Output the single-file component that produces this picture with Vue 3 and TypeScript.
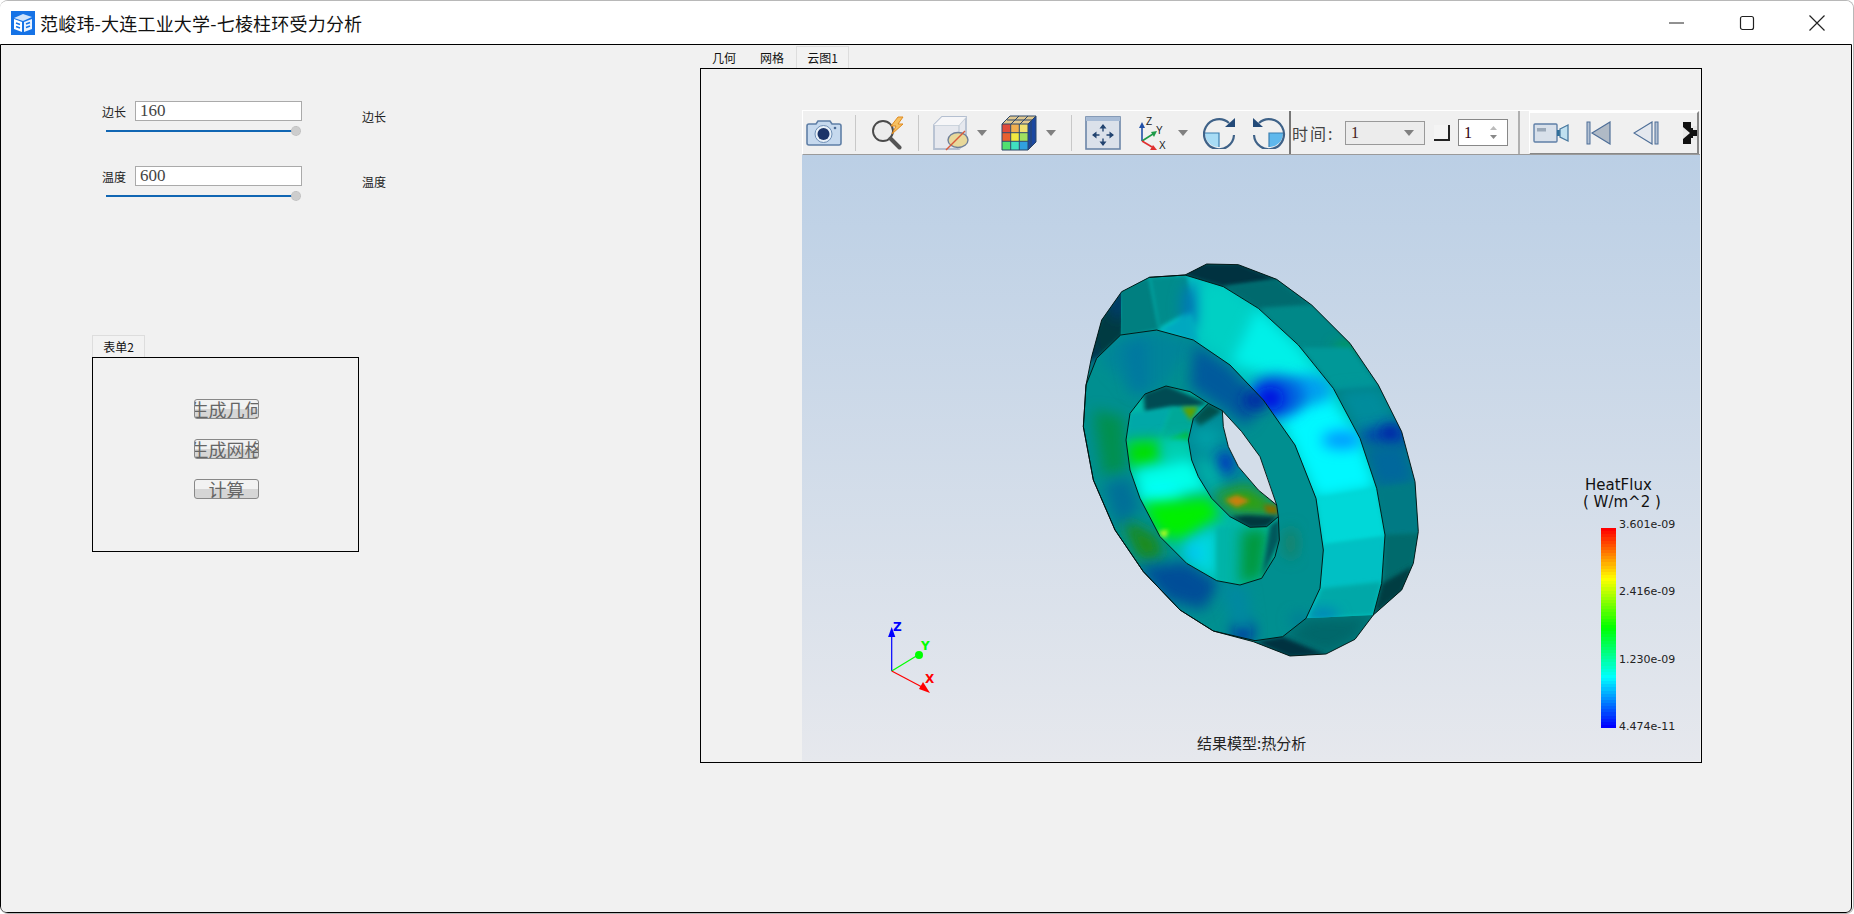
<script setup lang="ts">
type Patch = { pts?: string; e?: [number, number, number, number]; c: string; f: 'soft' | 'mid' }
const poly = (pts: string, c: string, f: 'soft' | 'mid' = 'mid'): Patch => ({ pts, c, f })
const blob = (x: number, y: number, rx: number, ry: number, c: string): Patch => ({ e: [x, y, rx, ry], c, f: 'soft' })

const pathOf = (s: string) => 'M' + s.trim().split(/\s+/).join('L') + 'Z'
const silhouette = '440,42 535,44 650,88 755,165 870,280 955,405 1025,545 1065,695 1075,845 1060,940 1025,1020 940,1095 885,1168 798,1212 690,1218 580,1175 460,1143 360,1080 250,965 165,840 100,690 70,530 78,405 95,320 125,210 185,125 268,82 375,75'
const band = '185,125 268,82 375,75 490,110 595,175 715,285 820,415 900,565 950,715 975,855 965,1000 940,1095 738,1105 780,1015 790,900 768,745 705,585 610,450 510,345 400,270 290,240 182,255'
const frontOuter = '182,255 290,240 400,270 510,345 610,450 705,585 768,745 790,900 780,1015 738,1105 668,1160 585,1172 460,1143 360,1080 250,965 165,840 100,690 70,530 78,405 110,325'
const hole = '255,432 318,408 390,425 445,460 487,482 545,545 600,620 650,765 655,800 658,870 645,920 605,985 540,1005 470,992 380,940 300,860 240,745 210,660 198,570 210,490'
const backWall = '445,460 487,482 490,530 505,590 535,650 595,720 650,765 655,800 620,830 570,832 510,800 455,745 415,680 395,630 385,570 400,505'
const gap = '487,482 545,545 600,620 625,690 650,765 595,720 535,650 505,590 490,530'

const surfaces: { id: string; d: string; base: string; patches: Patch[] }[] = [
  {
    id: 'sOuter', d: pathOf(silhouette), base: '#007f80', patches: [
      poly('380,40 540,40 660,90 490,112 375,78', '#003340'),
      poly('490,110 650,88 760,170 595,178', '#006a6e'),
      poly('600,175 755,165 875,285 720,290', '#008888'),
      poly('820,290 875,275 890,310 840,320', '#00a848', 'soft'),
      poly('720,290 870,290 960,410 825,420', '#009898'),
      poly('825,420 960,410 1030,550 900,565', '#008c9c', 'soft'),
      poly('900,540 1030,530 1040,590 905,575', '#0040b0', 'soft'),
      blob(990, 550, 30, 28, '#0020a8'),
      poly('910,590 1030,580 1070,700 950,715', '#00689c', 'soft'),
      poly('950,715 1070,700 1080,850 975,855', '#007a84'),
      poly('975,855 1080,850 1060,945 970,1000', '#006a6c'),
      poly('965,1000 1060,945 1030,1025 940,1095', '#003e42'),
      poly('668,1165 740,1105 940,1095 885,1170 800,1215', '#00686a', 'soft'),
      poly('585,1175 668,1160 800,1215 690,1222', '#003040'),
      poly('60,340 125,200 190,115 190,255 110,325', '#003a42'),
      blob(172, 165, 14, 45, '#003c8c'),
      blob(98, 320, 8, 30, '#00308c'),
    ],
  },
  {
    id: 'sBand', d: pathOf(band), base: '#00c4c0', patches: [
      poly('175,110 268,80 300,240 175,265', '#007f80'),
      poly('268,80 380,75 400,175 295,235', '#008c8c'),
      blob(395, 170, 30, 70, '#0078b8'),
      poly('300,240 395,190 420,280', '#00a8c0'),
      poly('420,100 490,100 590,175 510,335 420,270', '#00d0c4', 'soft'),
      poly('590,170 715,285 800,400 690,400 510,340', '#00f0e8', 'soft'),
      poly('650,480 800,420 900,565 950,715 770,745', '#00f8ff', 'soft'),
      blob(845, 570, 60, 28, '#0098ff'),
      blob(745, 420, 70, 45, '#00a0f0'),
      blob(650, 440, 85, 65, '#0060e0'),
      blob(630, 445, 42, 36, '#0008e0'),
      poly('770,745 950,715 975,860 790,885', '#00d8d8'),
      poly('790,885 975,860 970,995 785,1015', '#00c0c4'),
      poly('785,1015 965,995 940,1095 745,1105', '#00a8a8'),
      blob(790, 1095, 45, 16, '#0078c0'),
    ],
  },
  {
    id: 'sFront', d: pathOf(frontOuter) + pathOf(hole), base: '#008f90', patches: [
      poly('120,320 180,260 290,245 400,275 300,420 220,430', '#00849a', 'soft'),
      poly('190,290 260,260 260,420 220,430', '#0078a0', 'soft'),
      poly('400,280 510,350 610,455 560,530 480,470 390,410', '#005a9c', 'soft'),
      blob(590, 450, 40, 28, '#0020a8'),
      poly('100,480 190,500 200,660 130,680', '#009050', 'soft'),
      poly('180,800 290,860 310,920 240,930', '#1a8a14', 'soft'),
      poly('130,700 210,680 240,780 170,830', '#007098', 'soft'),
      poly('230,950 380,935 480,1000 430,1080 320,1050', '#004e98', 'soft'),
      blob(550, 1145, 30, 26, '#0010a8'),
      poly('480,1000 560,1010 580,1150 520,1130', '#0088a0', 'soft'),
      blob(692, 880, 18, 50, '#1a8060'),
      blob(720, 1110, 30, 20, '#007a98'),
    ],
  },
  {
    id: 'sHole', d: pathOf(hole), base: '#00b8a8', patches: [
      poly('250,430 318,405 445,460 395,475 335,472 255,490', '#004c52'),
      poly('210,490 335,472 300,565 198,572', '#00a8a8'),
      poly('335,472 415,472 385,565 300,565', '#00a898'),
      poly('365,472 415,470 392,512', '#60a000'),
      poly('320,568 385,545 388,572', '#00b828'),
      poly('198,575 300,570 310,640 208,660', '#00e000', 'soft'),
      poly('300,570 390,565 400,625 310,640', '#00d0b0', 'soft'),
      poly('215,660 395,625 450,720 250,760', '#00ffe8', 'soft'),
      blob(310, 735, 60, 30, '#00ffff'),
      poly('240,760 450,740 480,800 370,870 300,860', '#00f000', 'soft'),
      poly('295,845 325,840 315,865', '#d0ff20'),
      poly('370,880 470,830 470,990 400,950', '#00d8e0', 'soft'),
      blob(400, 910, 20, 22, '#00c0ff'),
      poly('470,830 560,835 545,1005 470,992', '#00b4a8'),
      poly('545,840 625,835 605,985 540,1005', '#00983c', 'soft'),
      poly('630,825 660,805 660,870 605,985', '#00585c'),
    ],
  },
  {
    id: 'sBack', d: pathOf(backWall), base: '#008c98', patches: [
      poly('400,505 445,460 487,482 420,530', '#00504c'),
      poly('390,560 420,530 490,540 450,620', '#00a0a8', 'soft'),
      blob(495, 640, 24, 34, '#0028c8'),
      poly('400,640 450,620 490,700 455,745', '#00b0a8', 'soft'),
      poly('455,735 560,705 650,765 640,795 520,790', '#30a010', 'soft'),
      poly('495,750 530,735 570,752 530,772', '#c88010'),
      poly('610,765 650,765 655,795 620,790', '#807000'),
      poly('510,800 560,795 655,800 620,832 570,835', '#00383c'),
    ],
  },
]

const legendBands = Array.from({ length: 64 }, (_, i) => {
  const t = i / 63
  const stops: [number, number[]][] = [
    [0, [255, 0, 0]], [0.25, [255, 255, 0]], [0.5, [0, 255, 0]], [0.75, [0, 255, 255]], [1, [0, 0, 255]],
  ]
  for (let k = 0; k < 4; k++) {
    const [a, ca] = stops[k]
    const [b, cb] = stops[k + 1]
    if (t <= b) {
      const u = (t - a) / (b - a)
      return `rgb(${ca.map((v, n) => Math.round(v + (cb[n] - v) * u)).join(',')})`
    }
  }
  return 'rgb(0,0,255)'
})

const params = [
  { label: '边长', value: '160' },
  { label: '温度', value: '600' },
]
const actions = ['生成几何', '生成网格', '计算']
const legendLabels = ['3.601e-09', '2.416e-09', '1.230e-09', '4.474e-11']
const cubeColors = ['#e04a3a', '#f0b050', '#f0e070', '#e86030', '#f0e840', '#a0e060', '#50e070', '#40e0c0', '#30a0e0']
</script>

<template>
  <div class="window">
    <header class="titlebar">
      <svg class="app-icon" width="24" height="24" viewBox="0 0 24 24">
        <rect width="24" height="24" fill="#1673e6" />
        <path d="M3 7 12 3l9 3-9 4z" fill="#cfe3fb" />
        <path d="M3 8l8 3v10l-8-3z" fill="#fff" />
        <path d="M13 11l8-3v10l-8 3z" fill="#eaf3fe" />
        <path d="M5 12l4 1.500M5 15.500l4 1.500M15 13l4-1.500M15 16.500l4-1.500" stroke="#1673e6" stroke-width="1.600" />
      </svg>
      <span class="title">范峻玮-大连工业大学-七棱柱环受力分析</span>
      <div class="controls">
        <svg width="16" height="16" viewBox="0 0 16 16"><path d="M0 8h15" stroke="#222" fill="none" /></svg>
        <svg width="16" height="16" viewBox="0 0 16 16"><rect x="1.500" y="1.500" width="13" height="13" rx="2" stroke="#222" stroke-width="1.200" fill="none" /></svg>
        <svg width="16" height="16" viewBox="0 0 16 16"><path d="M.5.5l15 15M15.500.5l-15 15" stroke="#222" stroke-width="1.200" fill="none" /></svg>
      </div>
    </header>

    <main class="body">
      <section class="left">
        <div class="params">
          <div v-for="p in params" :key="p.label" class="param">
            <div class="param-main">
              <div class="field">
                <label>{{ p.label }}</label>
                <input :value="p.value" readonly />
              </div>
              <div class="slider"><i class="thumb"></i></div>
            </div>
            <span class="side-label">{{ p.label }}</span>
          </div>
        </div>
        <div class="form">
          <div class="form-tab">表单2</div>
          <div class="form-box">
            <button v-for="a in actions" :key="a" class="action"><span>{{ a }}</span></button>
          </div>
        </div>
      </section>

      <section class="right">
        <nav class="tabs">
          <span class="tab">几何</span>
          <span class="tab">网格</span>
          <span class="tab active">云图1</span>
        </nav>
        <div class="panel">
          <div class="viewer">
            <div class="toolbar">
              <svg class="m4" width="36" height="28" viewBox="0 0 36 28">
                <path d="M3 5h7l2-3h12l2 3h7q2 0 2 2v17q0 2-2 2H3q-2 0-2-2V7q0-2 2-2z" fill="#c6d9ee" stroke="#5f7fa6" stroke-width="1.600" />
                <circle cx="17.500" cy="15" r="8.500" fill="#e8f0f8" stroke="#6f8fb5" />
                <circle cx="17.500" cy="15" r="6" fill="#1c3468" />
                <circle cx="29" cy="9" r="1.300" fill="#4a6a94" />
              </svg>
              <i class="sep m13"></i>
              <svg class="m13" width="37" height="34" viewBox="0 0 37 34">
                <circle cx="14" cy="15" r="10" fill="#ececec" stroke="#4a4a4a" stroke-width="1.900" />
                <path d="M21.500 22.500l9 9" stroke="#555" stroke-width="4" stroke-linecap="round" />
                <path d="M29 1l-7 9h5l-4 8 11-10h-5l5-7z" fill="#f6c060" stroke="#e08a20" stroke-width="1" />
              </svg>
              <i class="sep m12"></i>
              <svg class="m13" width="37" height="36" viewBox="0 0 37 36">
                <path d="M2 10l8-8h24v24l-7 8H2z" fill="#e6e8ee" stroke="#b4bfd0" stroke-width="1.800" />
                <path d="M2 10h25v24M27 10l7-8" fill="none" stroke="#c4cdd8" stroke-width="1.400" />
                <path d="M10 2h24l-7 8H2z" fill="#f6f6f8" />
                <ellipse cx="26" cy="25" rx="10" ry="7.500" fill="#e8d89a" stroke="#6f7f98" stroke-width="1.400" />
                <path d="M14 35 33 16" stroke="#d85a3a" stroke-width="1.500" />
              </svg>
              <svg class="m8" width="10" height="6" viewBox="0 0 10 6"><path d="M0 0h10L5 6z" fill="#808080" /></svg>
              <svg class="m14" width="37" height="36" viewBox="0 0 37 36">
                <path d="M1 9 9 1h26l-8 8z" fill="#e0c890" />
                <path d="M27 9l8-8v26l-8 8z" fill="#1c48a0" />
                <rect v-for="(c, i) in cubeColors" :key="i" :x="1 + (i % 3) * 8.670" :y="9 + Math.floor(i / 3) * 8.670" width="8.670" height="8.670" :fill="c" />
                <path d="M1 9h26v26H1zM9.700 9v26M18.300 9v26M1 17.700h26M1 26.300h26M27 9l8-8v26l-8 8M1 9l8-8h26M6 5h25M18 1l-8 8M27 1l-8 8M30 6v26" fill="none" stroke="#2c4668" stroke-width="1" />
              </svg>
              <svg class="m8" width="10" height="6" viewBox="0 0 10 6"><path d="M0 0h10L5 6z" fill="#808080" /></svg>
              <i class="sep m15"></i>
              <svg class="m13" width="36" height="34" viewBox="0 0 36 34">
                <rect x="1" y="1" width="34" height="32" fill="#dbe1ea" stroke="#6c86a8" stroke-width="1.600" />
                <rect x="1" y="1" width="34" height="4" fill="#a8bcd6" />
                <path d="M18 11.500v4M18 22.500v4M10.500 19h4M21.500 19h4" stroke="#234470" stroke-width="1.400" />
                <path d="M18 8l-3.500 4.500h7zM18 30l-3.500-4.500h7zM7 19l4.500-3.500v7zM29 19l-4.500-3.500v7z" fill="#234470" />
              </svg>
              <svg class="m17" width="30" height="34" viewBox="0 0 30 34" font-family="'Liberation Sans',sans-serif" font-size="10">
                <path d="M4 25V10" stroke="#1f4fa8" stroke-width="1.600" />
                <path d="M4 6l-3 6h6z" fill="#1f4fa8" />
                <path d="M4 25 15 18" stroke="#1e9a48" stroke-width="1.600" />
                <path d="M19 15l-6 1 3 5z" fill="#1e9a48" />
                <path d="M4 25 14 31" stroke="#e03030" stroke-width="1.600" />
                <path d="M19 34l-7 0 3-5z" fill="#e03030" />
                <text x="8" y="9" fill="#222">Z</text>
                <text x="18" y="18" fill="#222">Y</text>
                <text x="21" y="33" fill="#222">X</text>
              </svg>
              <svg class="m10" width="10" height="6" viewBox="0 0 10 6"><path d="M0 0h10L5 6z" fill="#808080" /></svg>
              <svg class="m15" width="34" height="32" viewBox="0 0 34 32">
                <path d="M2 16h14v14C8 30 2 24 2 16z" fill="#a8dcf5" />
                <path d="M2 16h14v14" fill="none" stroke="#3b7fb0" stroke-width="1.200" />
                <path d="M26 6A15 15 0 1 0 31 18" fill="none" stroke="#3f6288" stroke-width="2.200" />
                <path d="M22 10l10 0 0-9z" fill="#234a78" />
              </svg>
              <svg class="m14" width="35" height="32" viewBox="0 0 35 32">
                <path d="M32 16H18v14c8 0 14-6 14-14z" fill="#5fb8ec" />
                <path d="M32 16H18v14" fill="none" stroke="#3b7fb0" stroke-width="1.200" />
                <path d="M8 6A15 15 0 1 1 3 18" fill="none" stroke="#3f6288" stroke-width="2.200" />
                <path d="M12 10H2V1z" fill="#234a78" />
              </svg>
              <i class="sep-dark m3"></i>
              <span class="time-label">时间:</span>
              <div class="combo"><span>1</span><svg width="10" height="6" viewBox="0 0 10 6"><path d="M0 0h10L5 6z" fill="#808080" /></svg></div>
              <i class="check"></i>
              <div class="spin">
                <span>1</span>
                <div class="spin-arrows">
                  <svg width="7" height="4" viewBox="0 0 7 4"><path d="M3.500 0 7 4H0z" fill="#bbb" /></svg>
                  <svg width="7" height="4" viewBox="0 0 7 4"><path d="M0 0h7L3.500 4z" fill="#888" /></svg>
                </div>
              </div>
              <i class="sep-gray"></i>
              <div class="playbar">
                <svg width="36" height="20" viewBox="0 0 36 20">
                  <rect x="1" y="1" width="23" height="18" rx="1" fill="#d8e0ea" stroke="#5f7fa6" stroke-width="1.400" />
                  <rect x="4" y="5" width="9" height="3.500" fill="#9aa8b8" />
                  <path d="M24 7h3v6h-3z" fill="#2f6f9a" />
                  <path d="M27 6l8-4v16l-8-4z" fill="#bfe0f0" stroke="#4a7aa0" stroke-width="1.300" />
                </svg>
                <svg class="m17" width="25" height="24" viewBox="0 0 25 24">
                  <rect x="1" y="1" width="3" height="22" fill="#b4c2d4" stroke="#4f6f98" />
                  <path d="M24 1v22L6 12z" fill="#b0bac6" stroke="#4f6f98" stroke-width="1.200" />
                </svg>
                <svg class="m22" width="27" height="24" viewBox="0 0 27 24">
                  <path d="M19 1v22L1 12z" fill="#e4e8ee" stroke="#4f6f98" stroke-width="1.200" />
                  <rect x="22" y="1" width="3" height="22" fill="#b4c2d4" stroke="#4f6f98" />
                </svg>
                <svg class="m23" width="14" height="22" viewBox="0 0 14 22">
                  <path d="M0 0h8v6h6v10H8v6H0z" fill="#111" />
                  <path d="M0 5l7 6-7 6zM10 4h4v4h-4zM10 14h4v4h-4z" fill="#e8e8e8" />
                </svg>
              </div>
            </div>

            <div class="scene">
              <svg class="torus" viewBox="0 0 1140 1260">
                <defs>
                  <filter id="soft" x="-100%" y="-100%" width="300%" height="300%"><feGaussianBlur stdDeviation="20" /></filter>
                  <filter id="mid" x="-30%" y="-30%" width="160%" height="160%"><feGaussianBlur stdDeviation="6" /></filter>
                  <clipPath v-for="s in surfaces" :id="s.id" :key="s.id"><path :d="s.d" clip-rule="evenodd" /></clipPath>
                </defs>
                <g v-for="s in surfaces" :key="s.id" :clip-path="`url(#${s.id})`">
                  <rect width="1140" height="1260" :fill="s.base" />
                  <template v-for="(p, i) in s.patches" :key="i">
                    <polygon v-if="p.pts" :points="p.pts" :fill="p.c" :filter="`url(#${p.f})`" />
                    <ellipse v-else-if="p.e" :cx="p.e[0]" :cy="p.e[1]" :rx="p.e[2]" :ry="p.e[3]" :fill="p.c" filter="url(#soft)" />
                  </template>
                </g>
                <polygon :points="gap" fill="#d3dde9" />
                <g fill="none" stroke="#02110f" stroke-width="2.800" stroke-linejoin="round">
                  <polygon :points="silhouette" />
                  <polygon :points="frontOuter" />
                  <polygon :points="hole" />
                  <polyline points="268,82 375,75 490,110 595,175 715,285 820,415 900,565 950,715 975,855 965,1000 940,1095" />
                  <polyline points="445,460 400,505 385,570 395,630 415,680 455,745 510,800 570,832 620,830 655,800" />
                  <polyline points="487,482 490,530 505,590 535,650 595,720 650,765" />
                </g>
              </svg>

              <svg class="triad" width="65" height="75" viewBox="0 0 65 75" font-family="'DejaVu Sans',sans-serif" font-size="12" font-weight="700">
                <path d="M14.700 50V12" stroke="#0000ff" stroke-width="1.200" />
                <path d="M14.700 6l-3.600 10h7.200z" fill="#0000ff" />
                <path d="M14.700 50 41 34" stroke="#00ff00" stroke-width="1.200" />
                <circle cx="42" cy="34" r="4" fill="#00ff00" />
                <path d="M14.700 50 45 66" stroke="#ff0000" stroke-width="1.200" />
                <path d="M42 68l4-7 7 11z" fill="#ff0000" />
                <text x="16" y="10" fill="#0000ff">Z</text>
                <text x="44" y="29" fill="#00ff00">Y</text>
                <text x="48" y="62" fill="#ff0000">X</text>
              </svg>

              <div class="legend">
                <div class="legend-title">HeatFlux</div>
                <div class="legend-unit">( W/m^2 )</div>
                <div class="legend-scale">
                  <div class="legend-bar"><i v-for="(c, i) in legendBands" :key="i" :style="{ background: c }"></i></div>
                  <div class="legend-labels"><span v-for="l in legendLabels" :key="l">{{ l }}</span></div>
                </div>
              </div>

              <div class="caption">结果模型:热分析</div>
            </div>
          </div>
        </div>
      </section>
    </main>
  </div>
</template>

<style>
html, body { margin: 0; background: #fff; overflow: hidden; }
</style>

<style scoped>
.window {
  width: 1854px; height: 914px; box-sizing: border-box;
  display: flex; flex-direction: column;
  border-top: 1px solid #b8b8b8; border-right: 1px solid #b8b8b8; border-bottom: 1px solid #b8b8b8;
  border-radius: 8px; overflow: hidden; background: #fff;
  font-family: "Noto Sans CJK SC", "Noto Sans", sans-serif; color: #222;
}
.titlebar { height: 43px; flex: none; display: flex; align-items: center; padding: 0 0 0 11px; background: #fff; }
.app-icon { flex: none; }
.title { margin-left: 5px; font-size: 18px; color: #111; letter-spacing: .2px; white-space: nowrap; }
.controls { margin-left: auto; width: 156px; padding-right: 28px; display: flex; justify-content: space-between; align-items: center; height: 100%; }
.body {
  flex: 1; display: flex; box-sizing: border-box; background: #f1f1f1;
  border: 1px solid #000; margin-right: 1px; border-radius: 0 0 6px 6px;
}
.left { width: 699px; flex: none; }
.params { padding: 56px 0 0 101px; }
.param { display: flex; height: 65px; }
.param-main { width: 201px; }
.field { display: flex; align-items: center; height: 20px; }
.field label { width: 33px; font-size: 12px; }
.field input {
  width: 167px; height: 20px; box-sizing: border-box; border: 1px solid #aaa; background: #fff;
  padding: 0 0 0 4px; font: 17px "Liberation Serif", serif; color: #444; outline: none; border-radius: 0;
}
.slider { position: relative; width: 190px; height: 10px; margin: 5px 0 0 4px; }
.slider::before { content: ""; position: absolute; left: 0; right: 0; top: 4px; height: 2px; background: #1166b3; }
.thumb { position: absolute; right: -5px; top: 0; width: 10px; height: 10px; border-radius: 50%; background: #cdcdcd; border: 1px dotted #bbb; box-sizing: border-box; }
.side-label { margin: 7px 0 0 59px; font-size: 12px; line-height: 18px; }
.form { margin: 104px 0 0 91px; }
.form-tab { width: 53px; height: 22px; box-sizing: border-box; border: 1px solid #ddd; border-bottom: none; font-size: 12px; line-height: 21px; text-align: center; color: #111; background: #f2f2f2; }
.form-box { width: 267px; height: 195px; box-sizing: border-box; border: 1px solid #000; display: flex; flex-direction: column; align-items: center; gap: 20px; padding: 41px 0 0 2px; }
.action {
  width: 65px; height: 20px; flex: none; box-sizing: border-box; border: 1px solid #888; border-radius: 3px; padding: 0;
  background: linear-gradient(#f2f2f2 50%, #d6d6d6 50%); overflow: hidden; display: flex; justify-content: center; align-items: center;
  font: 18px/18px "Noto Sans CJK SC", sans-serif; color: #666;
}
.action span { flex: none; white-space: nowrap; }
.right { flex: none; padding-top: 1px; }
.tabs { display: flex; height: 22px; }
.tab { width: 48px; text-align: center; font-size: 12px; line-height: 24px; color: #111; }
.tab.active { width: 53px; box-sizing: border-box; border: 1px solid #ddd; border-bottom: none; line-height: 22px; background: #f2f2f2; }
.panel { width: 1002px; height: 695px; box-sizing: border-box; border: 1px solid #000; padding: 41px 0 0 101px; }
.viewer { width: 898px; height: 651px; display: flex; flex-direction: column; overflow: hidden; }
.toolbar {
  height: 45px; flex: none; box-sizing: border-box; display: flex; align-items: center;
  background: #f0f0f0; border-top: 1px solid #fff; border-left: 1px solid #fff; border-bottom: 1px solid #9a9a9a; overflow: hidden;
}
.toolbar svg { flex: none; }
.m3 { margin-left: 3px; } .m4 { margin-left: 3px; } .m8 { margin-left: 8px; } .m10 { margin-left: 10px; }
.m12 { margin-left: 12px; } .m13 { margin-left: 13px; } .m14 { margin-left: 14px; } .m15 { margin-left: 15px; }
.m17 { margin-left: 17px; } .m22 { margin-left: 22px; } .m23 { margin-left: 23px; }
.sep { width: 1px; height: 36px; background: #c8c8c8; flex: none; }
.sep-dark { width: 2px; height: 44px; background: #777; flex: none; }
.sep-gray { width: 2px; height: 44px; background: #b0b0b0; flex: none; margin-left: 10px; }
.time-label { margin-left: 1px; width: 43px; font: 16px "Noto Sans CJK SC", sans-serif; color: #444; letter-spacing: 2px; white-space: nowrap; flex: none; }
.combo { margin-left: 10px; width: 80px; height: 24px; box-sizing: border-box; border: 1px solid #999; display: flex; align-items: center; justify-content: space-between; padding: 0 10px 0 5px; font: 16px "Liberation Serif", serif; color: #422; background: #ececec; flex: none; }
.check { margin-left: 9px; width: 16px; height: 16px; box-sizing: border-box; border-right: 2px solid #222; border-bottom: 2px solid #222; background: #f4f4f4; flex: none; }
.spin { margin-left: 8px; width: 50px; height: 27px; box-sizing: border-box; border: 1px solid #888; background: #fff; display: flex; align-items: center; justify-content: space-between; padding: 0 10px 0 5px; font: 16px "Liberation Serif", serif; color: #301; flex: none; }
.spin-arrows { display: flex; flex-direction: column; gap: 5px; }
.playbar {
  margin-left: 9px; width: 170px; height: 44px; box-sizing: border-box; flex: none; display: flex; align-items: center; padding-left: 3px;
  background: #f0f0f0; border-top: 2px solid #fff; border-left: 1px solid #fff; border-right: 2px solid #888; border-bottom: 2px solid #888; overflow: hidden;
}
.scene { position: relative; flex: 1; background: linear-gradient(#bbcfe5, #e6e8ed); overflow: hidden; }
.torus { position: absolute; left: 258px; top: 95px; width: 380px; height: 420px; }
.triad { position: absolute; left: 75px; top: 466px; }
.legend { position: absolute; left: 774px; top: 321px; width: 110px; }
.legend-title { font: 15px/17px "DejaVu Sans", sans-serif; color: #111; padding-left: 9px; margin-top: 1px; }
.legend-unit { font: 15px/17px "DejaVu Sans", sans-serif; color: #111; padding-left: 7px; white-space: pre; }
.legend-scale { display: flex; align-items: flex-start; margin-top: 17px; margin-left: 25px; }
.legend-bar { width: 15px; height: 200px; display: flex; flex-direction: column; flex: none; }
.legend-bar i { flex: 1; display: block; }
.legend-labels { display: flex; flex-direction: column; justify-content: space-between; height: 216px; margin: -10px 0 0 3px; font: 11px/14px "DejaVu Sans", sans-serif; color: #222; }
.caption { position: absolute; left: 395px; top: 578px; font-size: 15px; line-height: 20px; color: #222; white-space: nowrap; }
</style>
